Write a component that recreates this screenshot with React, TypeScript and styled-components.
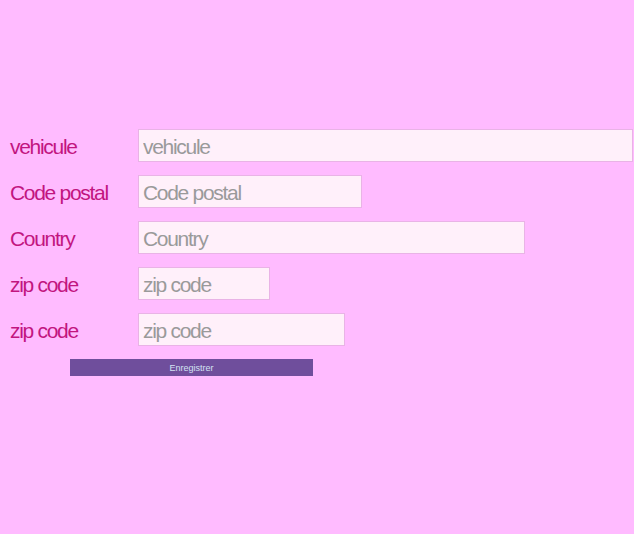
import React from "react";
import styled, { createGlobalStyle } from "styled-components";

const GlobalStyle = createGlobalStyle`
  html, body {
    margin: 0;
    padding: 0;
    background: #ffbbff;
  }
  body {
    font-family: "Liberation Sans", Arial, sans-serif;
  }
`;

const Page = styled.div`
  width: 634px;
  height: 534px;
  background: #ffbbff;
  padding: 129px 0 0 10px;
  box-sizing: border-box;
`;

const Form = styled.form`
  display: grid;
  grid-template-columns: 128px auto;
  row-gap: 13px;
  align-items: center;
  justify-items: start;
`;

const Label = styled.label`
  font-size: 21px;
  letter-spacing: -1.3px;
  color: #c2157f;
  height: 33px;
  padding-top: 2px;
  line-height: 31px;
  box-sizing: border-box;
`;

const Input = styled.input<{ $w: number }>`
  width: ${(p) => p.$w}px;
  height: 33px;
  box-sizing: border-box;
  padding: 2px 4px 0;
  border: 1px solid #e9b3e6;
  background: #fff0fa;
  font-family: "Liberation Sans", Arial, sans-serif;
  font-size: 21px;
  letter-spacing: -1.3px;
  color: #333;
  outline: none;

  &::placeholder {
    color: #9a9a9a;
  }
`;

const Actions = styled.div`
  grid-column: 1 / span 2;
  display: flex;
  padding-left: 60px;
`;

const Button = styled.button`
  width: 243px;
  height: 17px;
  border: none;
  padding: 0;
  background: #6f4e9c;
  color: #d3e2f2;
  font-family: "Liberation Sans", Arial, sans-serif;
  font-size: 9px;
  cursor: pointer;
`;

const fields = [
  { label: "vehicule", width: 495 },
  { label: "Code postal", width: 224 },
  { label: "Country", width: 387 },
  { label: "zip code", width: 132 },
  { label: "zip code", width: 207 },
];

export default function App() {
  return (
    <>
      <GlobalStyle />
      <Page>
        <Form onSubmit={(e) => e.preventDefault()}>
          {fields.map((f, i) => (
            <React.Fragment key={i}>
              <Label htmlFor={`f${i}`}>{f.label}</Label>
              <Input id={`f${i}`} $w={f.width} placeholder={f.label} />
            </React.Fragment>
          ))}
          <Actions>
            <Button type="submit">Enregistrer</Button>
          </Actions>
        </Form>
      </Page>
    </>
  );
}
